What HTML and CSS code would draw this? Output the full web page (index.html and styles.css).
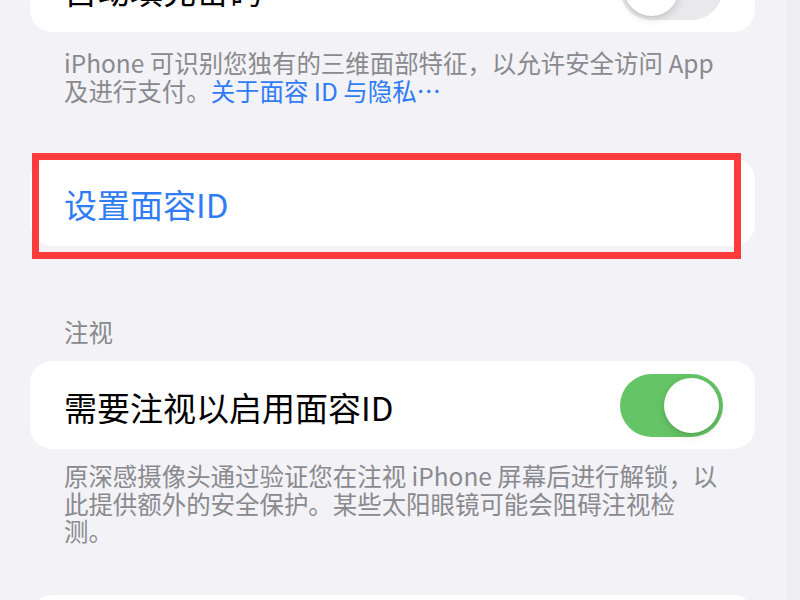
FILE: index.html
```html
<!DOCTYPE html>
<html lang="zh-CN">
<head>
<meta charset="utf-8">
<title>面容ID与密码</title>
<link rel="stylesheet" href="styles.css">
</head>
<body>
<div class="page">
  <main class="content">
    <section class="card first">
      <div class="row">
        <span class="label">自动填充密码</span>
        <span class="switch off"><span class="knob"></span></span>
      </div>
    </section>
    <p class="footer first-footer">iPhone 可识别您独有的三维面部特征，以允许安全访问 App 及进行支付。<a class="link">关于面容 ID 与隐私…</a></p>

    <section class="card highlighted">
      <div class="row">
        <span class="label action">设置面容ID</span>
      </div>
    </section>

    <h2 class="header">注视</h2>
    <section class="card">
      <div class="row">
        <span class="label">需要注视以启用面容ID</span>
        <span class="switch on"><span class="knob"></span></span>
      </div>
    </section>
    <p class="footer second-footer">原深感摄像头通过验证您在注视 iPhone 屏幕后进行解锁，以此提供额外的安全保护。某些太阳眼镜可能会阻碍注视检测。</p>

    <section class="card last">
      <div class="row"></div>
    </section>
  </main>
  <div class="edge"></div>
</div>
</body>
</html>
```

FILE: styles.css
```css
*, *::before, *::after { box-sizing: border-box; }

html, body {
  margin: 0;
  padding: 0;
  height: 600px;
  overflow: hidden;
  background: #f2f2f7;
  font-family: "Noto Sans CJK SC", "Noto Sans", sans-serif;
}

.page {
  display: flex;
  height: 600px;
}

.content {
  flex: 1;
  display: flex;
  flex-direction: column;
  padding: 0 32px 0 30px;
}

.edge {
  width: 13px;
  background: #efeff1;
}

.card {
  position: relative;
  background: #ffffff;
  border-radius: 22px;
  flex-shrink: 0;
}

.card.first { margin-top: -56px; }
.card.highlighted { margin-top: 54px; }
.card.last { margin-top: 50px; }

.card.highlighted::after {
  content: "";
  position: absolute;
  left: 2px;
  top: -5px;
  width: 709px;
  height: 106px;
  border: 7px solid #fd3a3c;
}

.row {
  height: 88px;
  display: flex;
  align-items: center;
  justify-content: space-between;
  padding: 0 32px 0 34px;
}

.label {
  font-size: 33px;
  color: #000000;
  line-height: 1;
  padding-top: 4px;
}

.label.action { color: #2f7cf6; }

.switch {
  position: relative;
  width: 103px;
  height: 63px;
  border-radius: 32px;
  display: flex;
  align-items: center;
  padding: 0 4px;
}

.switch.off {
  background: #e9e9eb;
  justify-content: flex-start;
}

.switch.on {
  background: #65c466;
  justify-content: flex-end;
}

.knob {
  width: 55px;
  height: 55px;
  border-radius: 50%;
  background: #ffffff;
  box-shadow: 0 3px 8px rgba(0, 0, 0, 0.15), 0 1px 1px rgba(0, 0, 0, 0.06);
}

.footer {
  margin: 0;
  padding: 13px 34px 0 34px;
  font-size: 24.45px;
  line-height: 27.5px;
  color: #8a8a8e;
  line-break: strict;
}

.footer.first-footer { padding-top: 17px; }

.link { color: #2f7cf6; }

.header {
  margin: 72px 0 15px 0;
  padding: 0 34px;
  font-size: 24.45px;
  line-height: 28px;
  font-weight: normal;
  color: #8a8a8e;
}
```
